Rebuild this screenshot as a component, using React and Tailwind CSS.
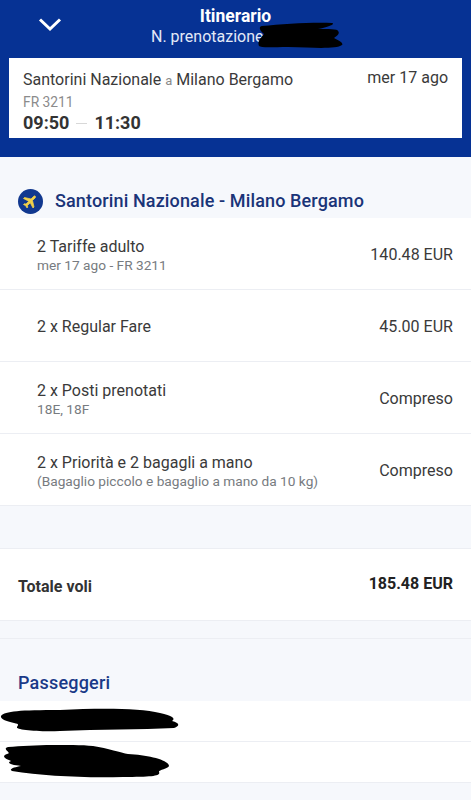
const font = { fontFamily: 'Roboto, "Liberation Sans", sans-serif' };

function Row({ title, sub, value }) {
  return (
    <div className="flex h-[72px] items-center justify-between border-b border-[#eceef3] bg-white pl-[37px] pr-[18px] pt-[3px]">
      <div className="flex flex-col">
        <span className="text-[16px] leading-[20px] text-[#3a3a3a]">{title}</span>
        {sub && <span className="text-[13.7px] leading-[16px] text-[#777b80]">{sub}</span>}
      </div>
      <span className="text-[16.05px] text-[#3a3a3a]">{value}</span>
    </div>
  );
}

function Scribble({ className, d, viewBox }) {
  return (
    <svg className={className} viewBox={viewBox} fill="#000" aria-hidden="true">
      <path d={d} />
    </svg>
  );
}

export default function App() {
  return (
    <div style={font} className="relative h-[800px] w-[471px] overflow-hidden bg-[#f6f8fc]">
      <header className="flex h-[157px] flex-col bg-[#063294] px-[9px]">
        <div className="relative flex h-[58px] flex-col items-center pt-[6px] text-white">
          <svg className="absolute left-[29px] top-[17px]" width="24" height="15" viewBox="0 0 24 15" fill="none" stroke="#fff" strokeWidth="3">
            <path d="M2 2.5 L12 12 L22 2.5" />
          </svg>
          <span className="text-[17.5px] font-bold leading-[21px]">Itinerario</span>
          <span className="w-[169px] text-[16px] leading-[19px] text-[#e3e9f7]">N. prenotazione</span>
          <Scribble
            className="absolute left-[249px] top-[21px] h-[28px] w-[86px]"
            viewBox="0 0 86 28"
            d="M4 5 C25 3 55 1 74 2 C78 3 70 6 60 8 C70 8 80 8 80 10 C82 12 80 14 76 17 C80 19 86 22 84 24 C78 28 60 27 30 26 C15 26 3 27 1 25 C-1 20 3 17 6 13 C2 10 0 6 4 5 Z"
          />
        </div>
        <section className="flex h-[80px] flex-col bg-white pl-[14px] pr-[14px] pt-[11px]">
          <div className="flex items-start justify-between">
            <span className="text-[16px] leading-[21px] text-[#3a3a3a]">
              Santorini Nazionale <span className="text-[13px] text-[#8a8a8a]">a</span> Milano Bergamo
            </span>
            <span className="text-[16px] leading-[17px] text-[#3a3a3a]">mer 17 ago</span>
          </div>
          <span className="mt-[3px] text-[13.8px] leading-[16px] text-[#8b8b8b]">FR 3211</span>
          <div className="mt-[2px] flex items-center text-[18px] font-bold leading-[22px] text-[#333]">
            <span>09:50</span>
            <span className="mx-[7px] h-px w-[11px] bg-[#d8d8d8]" />
            <span>11:30</span>
          </div>
        </section>
      </header>

      <div className="flex h-[61px] items-end gap-[12px] pb-[3px] pl-[18px]">
        <div className="mb-[1px] flex h-[25px] w-[25px] items-center justify-center rounded-full bg-[#11388f]">
          <svg width="17" height="17" viewBox="0 0 24 24" fill="#f1d04a" stroke="#f1d04a" strokeWidth="1" className="rotate-[45deg]">
            <path d="M21 16v-2l-8-5V3.5a1.5 1.5 0 0 0-3 0V9l-8 5v2l8-2.5V19l-2 1.5V22l3.5-1 3.5 1v-1.5L13 19v-5.5z" />
          </svg>
        </div>
        <h2 className="text-[18px] font-medium leading-[28px] tracking-[0.13px] text-[#1a3478]">Santorini Nazionale - Milano Bergamo</h2>
      </div>

      <Row title="2 Tariffe adulto" sub="mer 17 ago - FR 3211" value="140.48 EUR" />
      <Row title="2 x Regular Fare" value="45.00 EUR" />
      <Row title="2 x Posti prenotati" sub="18E, 18F" value="Compreso" />
      <Row title="2 x Priorità e 2 bagagli a mano" sub="(Bagaglio piccolo e bagaglio a mano da 10 kg)" value="Compreso" />

      <div className="mt-[42px] flex h-[73px] items-center justify-between border-y border-[#eceef3] bg-white pl-[18px] pr-[18px]">
        <span className="mt-[5px] text-[16px] font-bold text-[#333]">Totale voli</span>
        <span className="mb-[1px] text-[16px] font-bold text-[#222]">185.48 EUR</span>
      </div>

      <div className="mt-[17px] flex h-[63px] items-end border-t border-[#eceef3] pb-[5px] pl-[18px]">
        <h2 className="text-[18px] font-medium leading-[26px] tracking-[0.2px] text-[#1a3a88]">Passeggeri</h2>
      </div>

      <div className="relative h-[41px] border-b border-[#eceef3] bg-white">
        <Scribble
          className="absolute left-0 top-[7px] h-[24px] w-[180px]"
          viewBox="0 0 180 24"
          d="M1 8 C5 3 20 2 60 2 C100 0 140 0 160 5 C172 8 176 10 172 13 C180 15 180 18 174 20 C140 22 100 21 60 23 C40 24 15 22 17 19 C18 17 20 16 14 15 C6 13 0 11 1 8 Z"
        />
      </div>
      <div className="relative h-[41px] border-b border-[#eceef3] bg-white">
        <Scribble
          className="absolute left-[3px] top-[3px] h-[33px] w-[167px]"
          viewBox="0 0 167 33"
          d="M5 2 C30 0 70 -1 90 1 C105 3 118 8 125 9 C145 10 166 15 166 21 C165 24 155 25 156 27 C158 31 150 32 120 32 C80 33 40 31 9 26 C5 24 12 22 18 21 C8 20 3 18 8 16 C2 14 -2 11 4 9 C10 8 -2 4 5 2 Z"
        />
      </div>
    </div>
  );
}
